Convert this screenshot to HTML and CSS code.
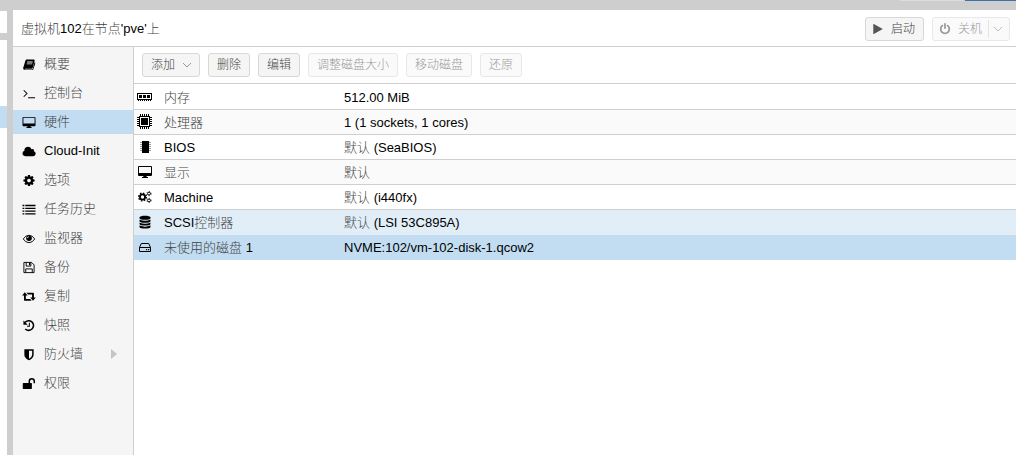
FILE: index.html
```
<!DOCTYPE html>
<html lang="zh-CN">
<head>
<meta charset="utf-8">
<title>虚拟机102 - 硬件</title>
<link rel="stylesheet" href="styles.css">
</head>
<body>
<svg class="sprite" aria-hidden="true">
  <symbol id="book" viewBox="0 0 14 14"><path fill-rule="evenodd" d="M4.6 1.500h7.600q1.200.2.900 1.400l-2.100 7.600q-.3 1-1.300 1H3q-.8 0-.8.500t.8.500h7.300l.6-.5L13 4.600q1 .4.700 1.300l-2 6.200q-.3.900-1.300.9H2.700Q.5 12.800.7 10.700l2.400-7.800q.3-1.300 1.500-1.400zM5 3.800v1h6v-1zm-.5 2v.9h6v-.9z"/></symbol>
  <symbol id="terminal" viewBox="0 0 14 14"><path fill="none" stroke="currentColor" stroke-width="1.100" d="M1.300 3.500 4.800 7 1.300 10.500M6 11.500h7.500"/></symbol>
  <symbol id="desktop" viewBox="0 0 16 14"><path fill-rule="evenodd" d="M2 1h12q1 0 1 1v8q0 1-1 1H9.500l.3 1h1.200v1H5v-1h1.200l.3-1H2q-1 0-1-1V2q0-1 1-1zM2 2v6h12V2z"/></symbol>
  <symbol id="cloud" viewBox="0 0 16 14"><path d="M4 12Q1 11.800 1 9q0-2 2-2.800Q3 2.500 6.500 2q3-.2 4.200 2.500 2-.7 2.700 1.200.2.500 0 1Q15.300 7.400 15.200 9.400 15 11.800 12.500 12z"/></symbol>
  <symbol id="cog" viewBox="0 0 1792 1792"><path d="M1152 896q0-106-75-181t-181-75-181 75-75 181 75 181 181 75 181-75 75-181zm512-109v222q0 12-8 23t-20 13l-185 28q-19 54-39 91 35 50 107 138 10 12 10 25t-9 23q-27 37-99 108t-94 71q-12 0-26-9l-138-108q-44 23-91 38-16 136-29 186-7 28-36 28h-222q-14 0-24.500-8.500t-11.500-21.500l-28-184q-49-16-90-37l-141 107q-10 9-25 9-14 0-25-11-126-114-165-168-7-10-7-23 0-12 8-23 15-21 51-66.500t54-70.500q-27-50-41-99l-183-27q-13-2-21-12.500t-8-23.500v-222q0-12 8-23t19-13l186-28q14-46 39-92-40-57-107-138-10-12-10-24 0-10 9-23 26-36 98.500-107.500t94.500-71.500q13 0 26 10l138 107q44-23 91-38 16-136 29-186 7-28 36-28h222q14 0 24.500 8.500t11.500 21.500l28 184q49 16 90 37l142-107q9-9 24-9 13 0 25 10 129 119 165 170 7 8 7 22 0 12-8 23-15 21-51 66.500t-54 70.500q26 50 41 98l183 28q13 2 21 12.500t8 23.500z"/></symbol>
  <symbol id="list" viewBox="0 0 14 14"><path d="M0 2h2v1.500H0zM3 2h11v1.500H3zM0 5h2v1.500H0zM3 5h11v1.500H3zM0 8h2v1.500H0zM3 8h11v1.500H3zM0 11h2v1.500H0zM3 11h11v1.500H3z"/></symbol>
  <symbol id="eye" viewBox="0 0 14 14"><path fill="none" stroke="currentColor" d="M.8 7.500Q3.300 3.500 7 3.500t6.200 4Q10.700 11.500 7 11.500T.8 7.500z"/><circle cx="7" cy="6.800" r="3"/><path fill="none" stroke="#f5f5f5" stroke-width=".8" d="M5.200 6.700Q5.200 5 7 5"/></symbol>
  <symbol id="save" viewBox="0 0 14 14"><path fill="none" stroke="currentColor" d="M1.500 1.500h8.300l2.700 2.700v8.300h-11zM3.500 12.500v-4h7v4M4 1.500v4h5v-4"/><path d="M7 2h1.300v2.500H7z"/></symbol>
  <symbol id="retweet" viewBox="0 0 16 14"><path d="M3.500 2.500 6.500 6H4.600v3.800h4.700l1.500 1.800H3.300q-.7 0-.7-.7V6H.6zM5.300 3h7.200q.8 0 .8.700V8h2l-3 3.700L9.400 8h1.900V4.900H6.900z"/></symbol>
  <symbol id="history" viewBox="0 0 14 14"><path fill="none" stroke="currentColor" stroke-width="1.700" d="M2.600 3.800A5.200 5.200 0 1 1 3 10.700"/><path d="M1 1.500v4.600h4.600z"/><path fill="none" stroke="currentColor" stroke-width="1.100" d="M7.400 4v3.700H4.900"/></symbol>
  <symbol id="shield" viewBox="0 0 14 14"><path fill-rule="evenodd" d="M2 1.300h10v6q0 3.700-5 6-5-2.300-5-6zm5 1.600v8.600q3.400-1.800 3.400-4.200V2.900z"/></symbol>
  <symbol id="unlock" viewBox="0 0 14 14"><path d="M1 6.500h8.500q.6 0 .6.600v5q0 .7-.7.700H1q-.7 0-.7-.7v-5q0-.6.700-.6z"/><path fill="none" stroke="currentColor" stroke-width="1.600" d="M7.300 7V4.700Q7.400 2 10 2t2.700 2.700v2"/></symbol>
  <symbol id="memory" viewBox="0 0 16 16"><path fill-rule="evenodd" d="M0 4h15v7H0zm1 1v5h13V5z"/><path d="M2 6h3v3H2zm4 0h3v3H6zm4 0h3v3h-3zM1 11h1v1H1zm2 0h1v1H3zm2 0h1v1H5zm2 0h1v1H7zm2 0h1v1H9zm2 0h1v1h-1zm2 0h1v1h-1z"/></symbol>
  <symbol id="cpu" viewBox="0 0 16 16"><path fill-rule="evenodd" d="M2 2h11v11H2zm1 1v9h9V3zM4 4h7v7H4z"/><path stroke="currentColor" d="M3.500 0v2m2-2v2m2-2v2m2-2v2m2-2v2m-8 11v2m2-2v2m2-2v2m2-2v2m2-2v2M0 3.500h2m-2 2h2m-2 2h2m-2 2h2m-2 2h2m11-8h2m-2 2h2m-2 2h2m-2 2h2m-2 2h2"/></symbol>
  <symbol id="chip" viewBox="0 0 16 16"><path d="M5 2h7v12H5z"/><path stroke="currentColor" d="M3 3.500h11M3 5.500h11m-11 2h11m-11 2h11m-11 2h11" opacity=".4"/></symbol>
  <symbol id="cogs" viewBox="0 0 16 14"><g fill="none" stroke="currentColor"><circle cx="5.500" cy="7" r="2.600" stroke-width="1.800"/><circle cx="5.500" cy="7" r="3.900" stroke-width="1.300" stroke-dasharray="1.530 1.530"/><circle cx="12" cy="3.600" r="1.400" stroke-width=".9"/><circle cx="12" cy="3.600" r="2.100" stroke-width=".8" stroke-dasharray="1.100 1.100"/><circle cx="12" cy="10.400" r="1.400" stroke-width=".9"/><circle cx="12" cy="10.400" r="2.100" stroke-width=".8" stroke-dasharray="1.100 1.100"/></g></symbol>
  <symbol id="database" viewBox="0 0 14 14"><path d="M1.500 2.300C1.500.100 12.500.100 12.500 2.300v1C12.500 5.300 1.500 5.300 1.500 3.300zM1.500 4.800q5.500 2.100 11 0v1.400c0 2-11 2-11 0zM1.500 7.700q5.500 2.100 11 0v1.400c0 2-11 2-11 0zM1.500 10.600q5.500 2.100 11 0V12c0 2-11 2-11 0z"/></symbol>
  <symbol id="hdd" viewBox="0 0 14 14"><path fill="none" stroke="currentColor" stroke-linejoin="round" d="M1.500 7.500h11v4h-11zM1.500 7.500l1.800-4h7.400l1.800 4"/><path d="M8 9h1.200v1.200H8zm2 0h1.200v1.200H10z"/></symbol>
  <symbol id="play" viewBox="0 0 14 14"><path d="M1.500 1.500q0-.6.600-.4l10 5.500q.5.400 0 .8l-10 5.500q-.6.200-.6-.4z"/></symbol>
  <symbol id="power" viewBox="0 0 1792 1792"><path d="M1664 896q0 156-61 298t-164 245-245 164-298 61-298-61-245-164-164-245-61-298q0-182 80.500-343t226.500-270q43-32 95.500-25t83.500 50q32 42 24.500 94.500t-49.500 84.500q-98 74-151.500 181t-53.500 228q0 104 40.500 198.500t109.500 163.500 163.500 109.500 198.500 40.500 198.500-40.500 163.500-109.500 109.500-163.500 40.500-198.500q0-121-53.500-228t-151.500-181q-42-32-49.500-84.500t24.500-94.500q31-43 84-50t95 25q146 109 226.500 270t80.500 343zm-640-768v640q0 52-38 90t-90 38-90-38-38-90v-640q0-52 38-90t90-38 90 38 38 90z"/></symbol>
  <symbol id="chevron" viewBox="0 0 10 10"><path fill="none" stroke="currentColor" d="M1 3l4 4 4-4"/></symbol>
  <symbol id="caret" viewBox="0 0 8 10"><path d="M1 0l6 5-6 5z"/></symbol>
</svg>
<div class="app">
  <header class="topbar"><span class="topbar-light"></span><span class="topbar-blue"></span></header>
  <aside class="tree"><div class="tree-head"></div><div class="tree-body"><div class="tree-selected"></div></div></aside>
  <main class="panel">
    <div class="titlebar">
      <h1 class="title">虚拟机<b>102</b>在节点<b>'pve'</b>上</h1>
      <button class="btn" type="button"><svg class="btn-icon"><use href="#play"/></svg>启动</button>
      <button class="btn split" type="button" disabled><svg class="btn-icon"><use href="#power"/></svg>关机<span class="split-arrow"><svg class="chevron"><use href="#chevron"/></svg></span></button>
    </div>
    <div class="content">
      <nav class="nav">
        <a class="nav-item" href="#"><svg class="icon"><use href="#book"/></svg>概要</a>
        <a class="nav-item" href="#"><svg class="icon"><use href="#terminal"/></svg>控制台</a>
        <a class="nav-item active" href="#" aria-current="page"><svg class="icon"><use href="#desktop"/></svg>硬件</a>
        <a class="nav-item" href="#"><svg class="icon"><use href="#cloud"/></svg><b>Cloud-Init</b></a>
        <a class="nav-item" href="#"><svg class="icon"><use href="#cog"/></svg>选项</a>
        <a class="nav-item" href="#"><svg class="icon"><use href="#list"/></svg>任务历史</a>
        <a class="nav-item" href="#"><svg class="icon"><use href="#eye"/></svg>监视器</a>
        <a class="nav-item" href="#"><svg class="icon"><use href="#save"/></svg>备份</a>
        <a class="nav-item" href="#"><svg class="icon"><use href="#retweet"/></svg>复制</a>
        <a class="nav-item" href="#"><svg class="icon"><use href="#history"/></svg>快照</a>
        <a class="nav-item" href="#"><svg class="icon"><use href="#shield"/></svg>防火墙<svg class="caret"><use href="#caret"/></svg></a>
        <a class="nav-item" href="#"><svg class="icon"><use href="#unlock"/></svg>权限</a>
      </nav>
      <section class="hardware">
        <div class="toolbar">
          <button class="btn" type="button">添加<svg class="chevron"><use href="#chevron"/></svg></button>
          <button class="btn" type="button">删除</button>
          <button class="btn" type="button">编辑</button>
          <button class="btn" type="button" disabled>调整磁盘大小</button>
          <button class="btn" type="button" disabled>移动磁盘</button>
          <button class="btn" type="button" disabled>还原</button>
        </div>
        <table class="grid">
          <tbody>
            <tr><td class="cell-icon"><svg class="icon large"><use href="#memory"/></svg></td><th scope="row">内存</th><td><b>512.00 MiB</b></td></tr>
            <tr><td class="cell-icon"><svg class="icon large"><use href="#cpu"/></svg></td><th scope="row">处理器</th><td><b>1 (1 sockets, 1 cores)</b></td></tr>
            <tr><td class="cell-icon"><svg class="icon large"><use href="#chip"/></svg></td><th scope="row"><b>BIOS</b></th><td>默认 <b>(SeaBIOS)</b></td></tr>
            <tr><td class="cell-icon"><svg class="icon"><use href="#desktop"/></svg></td><th scope="row">显示</th><td>默认</td></tr>
            <tr><td class="cell-icon"><svg class="icon"><use href="#cogs"/></svg></td><th scope="row"><b>Machine</b></th><td>默认 <b>(i440fx)</b></td></tr>
            <tr class="hover"><td class="cell-icon"><svg class="icon"><use href="#database"/></svg></td><th scope="row"><b>SCSI</b>控制器</th><td>默认 <b>(LSI 53C895A)</b></td></tr>
            <tr class="selected"><td class="cell-icon"><svg class="icon"><use href="#hdd"/></svg></td><th scope="row">未使用的磁盘 <b>1</b></th><td><b>NVME:102/vm-102-disk-1.qcow2</b></td></tr>
          </tbody>
        </table>
      </section>
    </div>
  </main>
</div>
</body>
</html>
```
FILE: styles.css
```
* { box-sizing: border-box; }

body {
  margin: 0;
  background: #cecece;
  color: #444;
  font: 300 13px/18px "Liberation Sans", "Noto Sans CJK SC", sans-serif;
}

b { color: #000; font-weight: 400; }

svg { fill: currentColor; flex: none; }

.sprite { display: none; }

.app {
  display: grid;
  grid-template: 10px 1fr / 7px 1fr;
  column-gap: 6px;
  min-height: 100vh;
}

.topbar {
  grid-column: 1 / -1;
  display: flex;
  justify-content: flex-end;
  gap: 2px;
}
.topbar-light { width: 63px; height: 1px; background: #dcdcdc; }
.topbar-blue { width: 51px; height: 1px; background: #3b74ad; }

.tree { display: flex; flex-direction: column; gap: 7px; padding-top: 1px; }
.tree-head { height: 22px; background: #fff; }
.tree-body { flex: 1; padding-top: 66px; background: #fff; }
.tree-selected { height: 22px; background: #c2ddf2; }

.panel { display: flex; flex-direction: column; min-width: 0; background: #fff; }

.titlebar {
  display: flex;
  align-items: center;
  gap: 8px;
  height: 37px;
  padding: 1px 6px 0 8px;
  border-bottom: 1px solid #cfcfcf;
}
.title { flex: 1; margin: 0; font-size: 13px; font-weight: 300; }

.btn {
  display: flex;
  align-items: center;
  height: 24px;
  padding: 0 8px;
  border: 1px solid #d8d8d8;
  border-radius: 3px;
  background: #f5f5f5;
  color: #444;
  font: inherit;
  font-size: 12px;
  white-space: nowrap;
}
.btn:disabled { border-color: #e8e8e8; background: #fafafa; color: #999; }
.btn-icon { width: 12px; height: 12px; margin: 0 7px 0 -2px; color: #555; }
.btn:disabled .btn-icon { color: #999; }
.btn .chevron { width: 10px; height: 10px; margin-left: 7px; margin-right: -1px; color: #999; }
.split { padding-right: 6px; }
.split-arrow { display: flex; margin-left: 6px; padding: 4px 0; border-left: 1px solid #e4e4e4; }
.btn .split-arrow .chevron { margin: 0 0 0 4px; color: #bbb; }

.content { display: flex; flex: 1; }

.nav {
  display: flex;
  flex-direction: column;
  gap: 5px;
  width: 121px;
  padding-top: 5px;
  border-right: 1px solid #cfcfcf;
  background: #f5f5f5;
}
.nav-item {
  display: flex;
  align-items: center;
  height: 24px;
  padding-left: 8px;
  color: inherit;
  text-decoration: none;
}
.nav-item.active { background: #c2ddf2; }
.icon { width: 16px; height: 14px; color: #000; }
.icon.large { height: 16px; }
.nav-item .icon { height: 13px; margin-right: 7px; }
.caret { width: 8px; height: 10px; margin: 0 15px 0 auto; color: #c4c4c4; }

.hardware { flex: 1; min-width: 0; }
.toolbar {
  display: flex;
  align-items: center;
  gap: 8px;
  height: 37px;
  padding: 0 8px;
  border-bottom: 1px solid #cfcfcf;
}

.grid {
  width: 100%;
  padding-top: 1px;
  border-collapse: separate;
  border-spacing: 0;
  table-layout: fixed;
}
.grid td, .grid th {
  height: 25px;
  padding: 2px 0 0;
  border-bottom: 1px solid #cfcfcf;
  font-weight: 300;
  text-align: left;
  vertical-align: middle;
  white-space: nowrap;
}
.grid .cell-icon { width: 30px; padding: 0 0 0 3px; }
.grid .icon { display: block; }
.grid th { width: 180px; }
.grid tr:nth-child(even) { background: #fafafa; }
.grid tr.hover { background: #e1eef8; }
.grid tr.hover td, .grid tr.hover th { border-color: #e1eef8; }
.grid tr.selected { background: #c2ddf2; }
.grid tr.selected td, .grid tr.selected th { border-color: #c2ddf2; }
```
